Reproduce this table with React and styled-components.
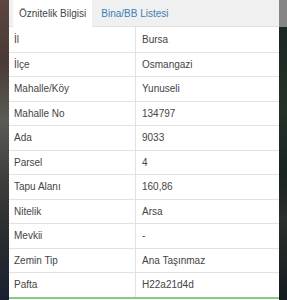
import React from 'react';
import styled, { createGlobalStyle } from 'styled-components';

const GlobalStyle = createGlobalStyle`
  html, body {
    margin: 0;
    padding: 0;
    width: 287px;
    height: 300px;
    overflow: hidden;
  }
  body {
    font-family: "Liberation Sans", Arial, sans-serif;
    background: #222;
  }
`

const Backdrop = styled.div`
  display: grid;
  grid-template-columns: 9px 270px 8px;
  height: 300px;
  overflow: hidden;
`

const LeftSide = styled.div`
  background: linear-gradient(180deg, #5e4640 0%, #4a3a36 20%, #5a5a56 40%, #3e3e3c 60%, #2c3030 75%, #1a2030 100%);
`

const RightSide = styled.div`
  display: flex;
  flex-direction: column;
`

const RightTop = styled.div`
  height: 27px;
  background: #858585;
`

const RightBottom = styled.div`
  flex: 1;
  background: linear-gradient(180deg, #1b2620 0%, #243229 30%, #1a2420 55%, #2a302c 70%, #151a1e 100%);
`

const Panel = styled.div`
  display: flex;
  flex-direction: column;
  background: #fff;
`

const TabBar = styled.div`
  display: flex;
  align-items: stretch;
  height: 27px;
  padding-left: 4px;
  background: #f0f0f0;
  border-bottom: 1px solid #e0e0e0;
  box-sizing: border-box;
`

const Tab = styled.div`
  display: flex;
  align-items: center;
  padding: 0 6px;
  font-size: 10px;
  color: ${(p) => (p.$active ? '#444' : '#3b7fb6')};
  background: ${(p) => (p.$active ? '#fff' : 'transparent')};
  margin-bottom: ${(p) => (p.$active ? '-1px' : '0')};
  margin-left: ${(p) => (p.$active ? '0' : '3px')};
`

const Table = styled.div`
  display: flex;
  flex-direction: column;
`

const Row = styled.div`
  display: grid;
  grid-template-columns: 126px 1fr;
  height: 24.5px;
  border-top: ${(p) => (p.$first ? 'none' : '1px solid #e2e2e2')};
  box-sizing: border-box;
`

const Cell = styled.div`
  display: flex;
  align-items: center;
  padding-left: ${(p) => (p.$value ? '6px' : '5px')};
  font-size: 10px;
  color: #444;
  border-left: ${(p) => (p.$value ? '1px solid #e2e2e2' : 'none')};
`

const GreenLine = styled.div`
  height: 2.5px;
  background: #86cc86;
`

const rows = [
  ['İl', 'Bursa'],
  ['İlçe', 'Osmangazi'],
  ['Mahalle/Köy', 'Yunuseli'],
  ['Mahalle No', '134797'],
  ['Ada', '9033'],
  ['Parsel', '4'],
  ['Tapu Alanı', '160,86'],
  ['Nitelik', 'Arsa'],
  ['Mevkii', '-'],
  ['Zemin Tip', 'Ana Taşınmaz'],
  ['Pafta', 'H22a21d4d'],
];

function App() {
  return (
    <>
      <GlobalStyle />
      <Backdrop>
        <LeftSide />
        <Panel>
          <TabBar>
            <Tab $active>Öznitelik Bilgisi</Tab>
            <Tab>Bina/BB Listesi</Tab>
          </TabBar>
          <Table>
            {rows.map(([label, value], i) => (
              <Row key={label} $first={i === 0}>
                <Cell>{label}</Cell>
                <Cell $value>{value}</Cell>
              </Row>
            ))}
          </Table>
          <GreenLine />
        </Panel>
        <RightSide>
          <RightTop />
          <RightBottom />
        </RightSide>
      </Backdrop>
    </>
  );
}

export default App;
